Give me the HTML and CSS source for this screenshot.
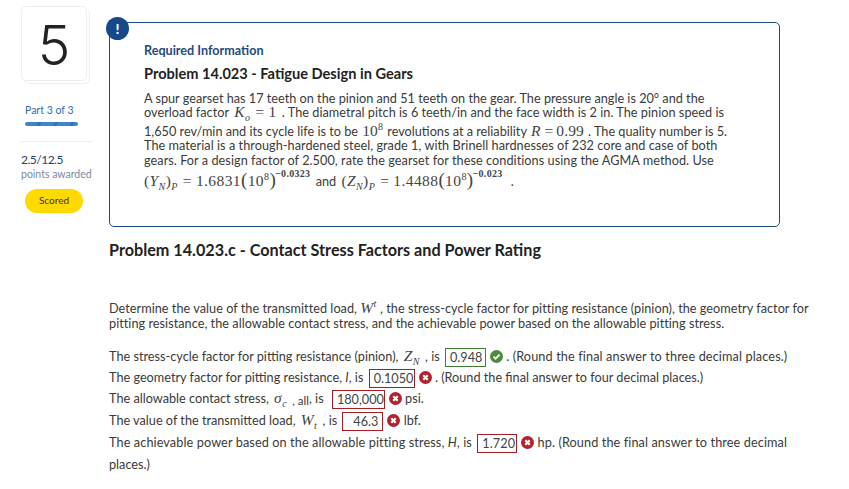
FILE: index.html
```html
<!DOCTYPE html>
<html lang="en">
<head>
<meta charset="utf-8">
<title>Problem 14.023</title>
<link rel="stylesheet" href="styles.css">
</head>
<body>
<div class="page">
  <aside class="side">
    <div class="num-card"><span>5</span></div>
    <div class="part">Part 3 of 3</div>
    <div class="bar"></div>
    <hr class="rule">
    <div class="score">2.5/12.5</div>
    <div class="awarded">points awarded</div>
    <div class="pill">Scored</div>
  </aside>
  <main class="main">
    <section class="info">
      <div class="badge">!</div>
      <h3 class="req">Required Information</h3>
      <h2 class="ptitle">Problem 14.023 - Fatigue Design in Gears</h2>
      <div class="stmt">
        <div class="l l1">A spur gearset has 17 teeth on the pinion and 51 teeth on the gear. The pressure angle is 20° and the</div>
        <div class="l l2">overload factor <span class="m"><i>K<sub>o</sub></i><span class="eq">=</span>1</span> . The diametral pitch is 6 teeth/in and the face width is 2 in. The pinion speed is</div>
        <div class="l l3">1,650 rev/min and its cycle life is to be <span class="m">10<sup>8</sup></span> revolutions at a reliability <span class="m"><i>R</i><span class="eq">=</span>0.99</span> . The quality number is 5.</div>
        <div class="l l4">The material is a through-hardened steel, grade 1, with Brinell hardnesses of 232 core and case of both</div>
        <div class="l l5">gears. For a design factor of 2.500, rate the gearset for these conditions using the AGMA method. Use</div>
        <div class="l l6"><span class="m first">(<i>Y<sub>N</sub></i>)<sub><i>P</i></sub><span class="eq">=</span>1.6831<span class="paren">(</span>10<sup>8</sup><span class="paren">)</span><sup class="exp">−0.0323</sup></span> and <span class="m">(<i>Z<sub>N</sub></i>)<sub><i>P</i></sub><span class="eq">=</span>1.4488<span class="paren">(</span>10<sup>8</sup><span class="paren">)</span><sup class="exp">−0.023</sup></span> <span class="dot">.</span></div>
      </div>
    </section>
    <h2 class="head">Problem 14.023.c - Contact Stress Factors and Power Rating</h2>
    <p class="intro">Determine the value of the transmitted load, <span class="m"><i>W<sup>t</sup></i></span> , the stress-cycle factor for pitting resistance (pinion), the geometry factor for pitting resistance, the allowable contact stress, and the achievable power based on the allowable pitting stress.</p>
    <div class="answers">
      <div class="row r1">The stress-cycle factor for pitting resistance (pinion), <span class="m"><i>Z<sub>N</sub></i></span> , is <span class="ans ok a1">0.948</span><svg class="ic" viewBox="0 0 14 14"><circle cx="7" cy="7" r="7" fill="#4d8b3d"/><path d="M3.8 7.2 6 9.4 10.3 5" fill="none" stroke="#fff" stroke-width="2"/></svg> <span class="tail">. (Round the final answer to three decimal places.)</span></div>
      <div class="row r2">The geometry factor for pitting resistance, <i>I</i>, is <span class="ans bad a2">0.1050</span><svg class="ic" viewBox="0 0 14 14"><circle cx="7" cy="7" r="7" fill="#b3222a"/><path d="M4.6 4.6 9.4 9.4M9.4 4.6 4.6 9.4" fill="none" stroke="#fff" stroke-width="2.4"/></svg> . (Round the final answer to four decimal places.)</div>
      <div class="row r3">The allowable contact stress, <span class="m"><i>σ<sub>c</sub></i></span> <span class="sub-all">, all</span>, is <span class="ans bad a3">180,000</span><svg class="ic" viewBox="0 0 14 14"><circle cx="7" cy="7" r="7" fill="#b3222a"/><path d="M4.6 4.6 9.4 9.4M9.4 4.6 4.6 9.4" fill="none" stroke="#fff" stroke-width="2.4"/></svg> psi.</div>
      <div class="row r4">The value of the transmitted load, <span class="m"><i>W<sub>t</sub></i></span> , is <span class="ans bad a4">46.3</span><svg class="ic" viewBox="0 0 14 14"><circle cx="7" cy="7" r="7" fill="#b3222a"/><path d="M4.6 4.6 9.4 9.4M9.4 4.6 4.6 9.4" fill="none" stroke="#fff" stroke-width="2.4"/></svg> lbf.</div>
      <div class="row r5">The achievable power based on the allowable pitting stress, <i>H</i>, is <span class="ans bad a5">1.720</span><svg class="ic" viewBox="0 0 14 14"><circle cx="7" cy="7" r="7" fill="#b3222a"/><path d="M4.6 4.6 9.4 9.4M9.4 4.6 4.6 9.4" fill="none" stroke="#fff" stroke-width="2.4"/></svg> hp. (Round the final answer to three decimal</div>
      <div class="row r6">places.)</div>
    </div>
  </main>
</div>
</body>
</html>
```
FILE: styles.css
```css
* { box-sizing: border-box; }
html, body { margin: 0; padding: 0; }
body { width: 849px; height: 489px; overflow: hidden; background: #fff; color: #3a3a3a; font-family: Lato, "Liberation Sans", sans-serif; font-size: 12.7px; }
.page { display: flex; padding: 6px 0 0 21px; }
.side { width: 88px; flex: none; }
.num-card { width: 66px; height: 75px; padding-top: 4px; border: 1px solid #eee; border-radius: 5px; background: #fff; box-shadow: 3px 3px 0 -1px #fff, 3px 3px 0 0 #eee; display: flex; align-items: center; justify-content: center; }
.num-card span { font-family: Inter, Lato, sans-serif; font-size: 55px; font-weight: 300; line-height: 1; color: #222; }
.part { margin: 23px 0 0 4px; font-size: 10.5px; line-height: 13px; color: #2d6cb5; }
.bar { margin: 5px 0 0 4px; width: 53px; height: 4px; border-radius: 2px; background: repeating-linear-gradient(115deg, #3b87c9 0 12px, #2f72b3 12px 15px); }
.rule { margin: 15px 0 0; width: 72px; border: 0; border-top: 1px solid #eee; }
.score { margin-top: 10px; font-size: 12px; letter-spacing: -.5px; line-height: 15px; color: #1f3f70; }
.awarded { margin-top: 1px; font-size: 10.5px; line-height: 13px; color: #7d8a99; }
.pill { margin: 8px 0 0 4px; width: 58px; height: 24px; border-radius: 12px; background: #ffd900; color: #333; font-size: 10px; line-height: 23px; text-align: center; }
.main { width: 720px; padding-top: 16px; }
.info { position: relative; width: 671px; height: 205px; border: 1.5px solid #1b4a82; border-radius: 5px; padding: 21px 0 0 34px; }
.badge { position: absolute; left: -4px; top: -6px; width: 23px; height: 23px; border-radius: 50%; background: #16488a; color: #fff; font-weight: 900; font-size: 14px; line-height: 23px; text-align: center; }
.req { margin: 0; font-size: 12.6px; line-height: 14px; font-weight: 700; color: #1f4a80; }
.ptitle { margin: 8px 0 0; font-size: 14.6px; line-height: 16px; font-weight: 700; color: #222; }
.stmt { margin-top: 9px; }
.l { line-height: 15px; white-space: nowrap; }
.l1, .l3 { height: 14px; }
.l2 { height: 19px; letter-spacing: .03px; }
.l4 { height: 15px; letter-spacing: .04px; }
.l5 { height: 21px; letter-spacing: .05px; }
.l .m { line-height: 0; }
.m { font-family: "Liberation Serif", "DejaVu Serif", serif; color: #444; font-size: 15.5px; letter-spacing: .4px; margin: 0 2px; }
.l3 .m { margin: 0 1px; letter-spacing: .1px; }
.first { margin-left: 0; }
.eq { margin: 0 4px 0 5px; }
.l3 .eq { margin: 0 3px 0 4px; }
.dot { margin-left: 3px; }
.m sub, .m sup { font-size: 10px; line-height: 0; }
.m .paren { font-size: 19px; line-height: 0; }
.m .exp { font-size: 10px; font-weight: 700; letter-spacing: .3px; position: relative; top: -3px; margin-left: -1px; }
.head { margin: 14px 0 0; font-size: 16.2px; line-height: 18px; font-weight: 700; color: #222; }
.intro { margin: 42px 0 0; width: 710px; line-height: 15px; letter-spacing: .03px; }
.intro .m { line-height: 0; margin: 0; }
.answers { margin-top: 15px; }
.row { white-space: nowrap; height: 21px; line-height: 21px; }
.row .m { line-height: 0; }
.r3, .r4, .r5 { height: 22px; }
.r3 .ans { margin-left: 5px; }
.r5 { letter-spacing: .1px; }
.r6 { height: 20px; }
.tail { letter-spacing: .12px; }
.ans { display: inline-block; height: 19px; line-height: 17px; border: 1px solid; padding: 0 4px; margin-left: 2px; text-align: right; vertical-align: middle; color: #444; }
.ok { border-color: #3f7f32; }
.bad { border-color: #a81c22; }
.a1 { width: 41px; } .a2 { width: 46px; } .a3 { width: 53px; } .a4 { width: 41px; } .a5 { width: 40px; }
.ic { width: 13px; height: 13px; vertical-align: -2px; margin-left: 4px; }
.sub-all { font-size: 11.5px; position: relative; top: 2px; }
```
